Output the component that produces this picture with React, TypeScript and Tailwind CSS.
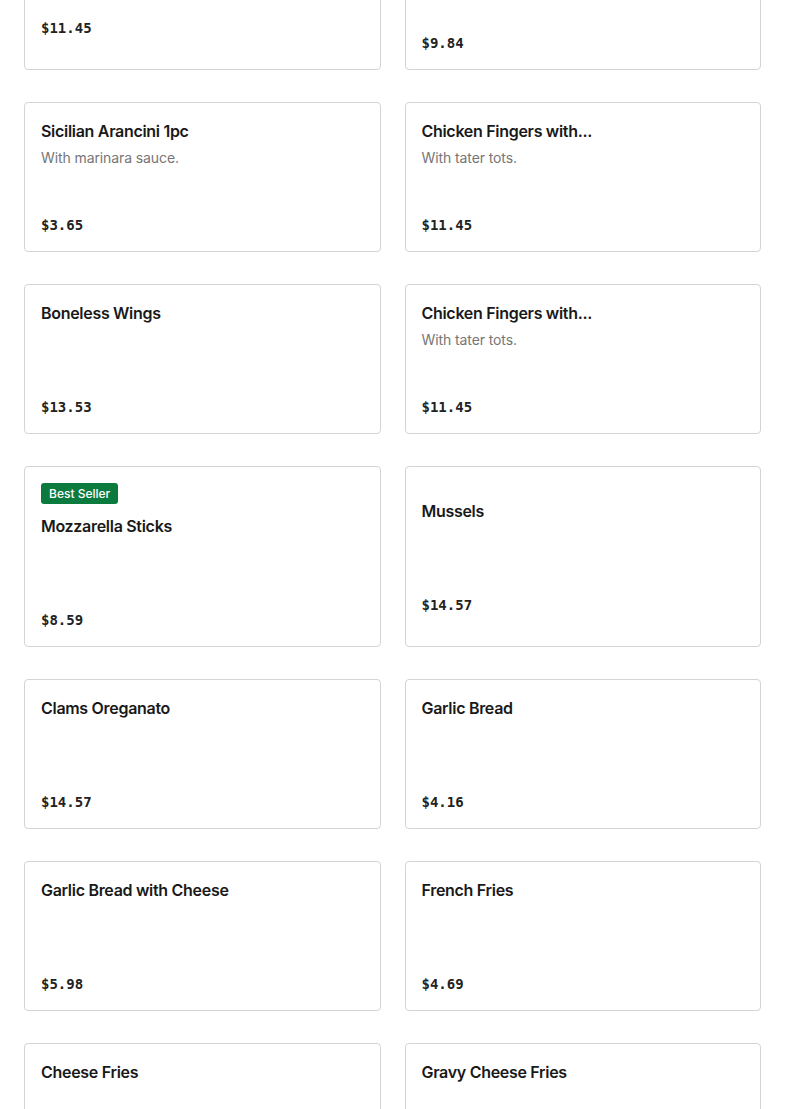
import React from "react";

type Item = {
  title: string;
  desc?: string;
  price: string;
  badge?: boolean;
  extraBottom?: boolean;
};

const rows: Item[][] = [
  [
    { title: "Chicken Fingers with...", desc: "With tater tots.", price: "$11.45", extraBottom: true },
    { title: "Buffalo Wings", price: "$9.84" },
  ],
  [
    { title: "Sicilian Arancini 1pc", desc: "With marinara sauce.", price: "$3.65" },
    { title: "Chicken Fingers with...", desc: "With tater tots.", price: "$11.45" },
  ],
  [
    { title: "Boneless Wings", price: "$13.53" },
    { title: "Chicken Fingers with...", desc: "With tater tots.", price: "$11.45" },
  ],
  [
    { title: "Mozzarella Sticks", price: "$8.59", badge: true },
    { title: "Mussels", price: "$14.57" },
  ],
  [
    { title: "Clams Oreganato", price: "$14.57" },
    { title: "Garlic Bread", price: "$4.16" },
  ],
  [
    { title: "Garlic Bread with Cheese", price: "$5.98" },
    { title: "French Fries", price: "$4.69" },
  ],
  [
    { title: "Cheese Fries", price: "$6.29" },
    { title: "Gravy Cheese Fries", price: "$7.49" },
  ],
];

const sans = "font-['Inter','Liberation_Sans',sans-serif]";

function Card({ item, first }: { item: Item; first?: boolean }) {
  return (
    <div
      className={`flex flex-col ${first ? "justify-end" : "justify-center"} rounded-[4px] border border-[#d4d4d4] bg-white px-4 pt-4 pb-4`}
    >
      {item.badge && (
        <div className="mb-[10px] flex">
          <span
            className={`${sans} flex h-[21px] items-center rounded-[3px] bg-[#0b7a3f] px-2 text-[12px] font-medium text-white`}
          >
            Best Seller
          </span>
        </div>
      )}
      <div className="flex h-[116px] flex-col">
        <div
          className={`${sans} h-[24px] text-[16px] leading-[24px] font-semibold tracking-[-0.3px] text-[#191919]`}
        >
          {item.title}
        </div>
        {item.desc && (
          <div
            className={`${sans} mt-[4px] text-[14px] leading-[22px] tracking-[-0.1px] text-[#767676]`}
          >
            {item.desc}
          </div>
        )}
        <div className="mt-auto font-['DejaVu_Sans_Mono','Liberation_Mono',monospace] text-[14px] leading-[20px] font-semibold text-[#222]">
          {item.price}
        </div>
      </div>
      {item.extraBottom && <div className="h-[15px]" />}
    </div>
  );
}

export default function App() {
  return (
    <div className="min-h-screen overflow-hidden bg-white">
      <div className="mt-[-95px] grid grid-cols-2 gap-x-6 gap-y-8 px-6">
        {rows.map((row, ri) =>
          row.map((item, ci) => (
            <Card key={`${ri}-${ci}`} item={item} first={ri === 0} />
          ))
        )}
      </div>
    </div>
  );
}
